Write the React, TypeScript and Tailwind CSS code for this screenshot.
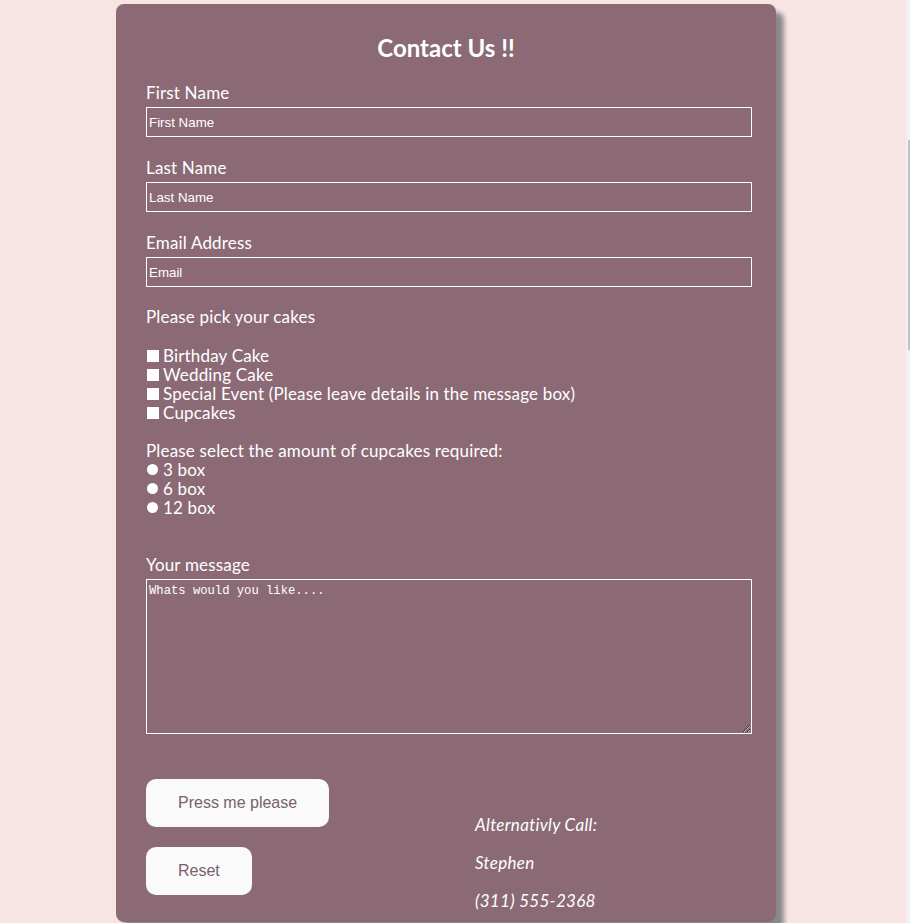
import React from "react";

const labelCls = "block text-[17px] leading-[19px] tracking-[0.17px] text-white";
const inputCls =
  "block w-[606px] h-[30px] border border-white bg-transparent px-[2px] text-[13.33px] text-white placeholder:text-white outline-none font-['Liberation_Sans',Arial,sans-serif]";

function Field({ label, placeholder, gap }: { label: string; placeholder: string; gap: string }) {
  return (
    <div className={gap}>
      <label className={`${labelCls} mb-[5px]`}>{label}</label>
      <input type="text" placeholder={placeholder} className={inputCls} />
    </div>
  );
}

function Check({ label }: { label: string }) {
  return (
    <label className="flex items-center h-[19px] text-[17px] tracking-[0.17px] text-white">
      <input
        type="checkbox"
        className="appearance-none w-[12px] h-[12px] bg-white ml-[1px] mr-[4px] shrink-0"
      />
      {label}
    </label>
  );
}

function Radio({ label }: { label: string }) {
  return (
    <label className="flex items-center h-[19px] text-[17px] tracking-[0.17px] text-white">
      <input
        type="radio"
        name="box"
        className="appearance-none w-[11px] h-[11px] rounded-full bg-white ml-[1px] mr-[5px] shrink-0"
      />
      {label}
    </label>
  );
}

export default function App() {
  return (
    <div className="flex min-h-[923px] bg-[#f9e4e4] font-['Lato','Open_Sans',sans-serif]">
      <div className="flex-1 pl-[116px] pt-[4px]">
        <form className="w-[660px] rounded-[8px] bg-[#8b6a76] pt-[29px] pl-[30px] pb-[11px] shadow-[8px_8px_5px_#888]">
          <h1 className="text-center text-[24px] leading-[30px] font-bold text-white pr-[30px] mb-[20px]">
            Contact Us !!
          </h1>

          <Field label="First Name" placeholder="First Name" gap="mb-[21px]" />
          <Field label="Last Name" placeholder="Last Name" gap="mb-[21px]" />
          <Field label="Email Address" placeholder="Email" gap="mb-[20px]" />

          <p className={`${labelCls} mb-[20px]`}>Please pick your cakes</p>
          <div className="mb-[19px]">
            <Check label="Birthday Cake" />
            <Check label="Wedding Cake" />
            <Check label="Special Event (Please leave details in the message box)" />
            <Check label="Cupcakes" />
          </div>

          <p className={labelCls}>Please select the amount of cupcakes required:</p>
          <div className="mb-[38px]">
            <Radio label="3 box" />
            <Radio label="6 box" />
            <Radio label="12 box" />
          </div>

          <label className={`${labelCls} mb-[5px]`}>Your message</label>
          <textarea
            placeholder="Whats would you like...."
            className="block w-[606px] h-[155px] border border-white bg-transparent px-[2px] pt-[4px] text-[12.2px] leading-[15px] text-white placeholder:text-white outline-none font-['Liberation_Mono',monospace]"
          />

          <div className="flex mt-[45px]">
            <div className="flex flex-col items-start gap-[20px] w-[329px]">
              <button
                type="submit"
                className="h-[48px] px-[32px] rounded-[10px] bg-[#fafafa] text-[16px] text-[#76626b] font-['Liberation_Sans',Arial,sans-serif]"
              >
                Press me please
              </button>
              <button
                type="reset"
                className="h-[48px] px-[32px] rounded-[10px] bg-[#fafafa] text-[16px] text-[#76626b] font-['Liberation_Sans',Arial,sans-serif]"
              >
                Reset
              </button>
            </div>
            <div className="flex flex-col gap-[18px] pt-[36px] italic text-[17px] leading-[20px] tracking-[0.3px] text-white">
              <p>Alternativly Call:</p>
              <p>Stephen</p>
              <p>(311) 555-2368</p>
            </div>
          </div>
        </form>
      </div>
      <div className="w-[4px] bg-[#f1f1f1] pt-[140px]">
        <div className="ml-[2px] w-[2px] h-[210px] bg-[#c1c1c1]" />
      </div>
    </div>
  );
}
